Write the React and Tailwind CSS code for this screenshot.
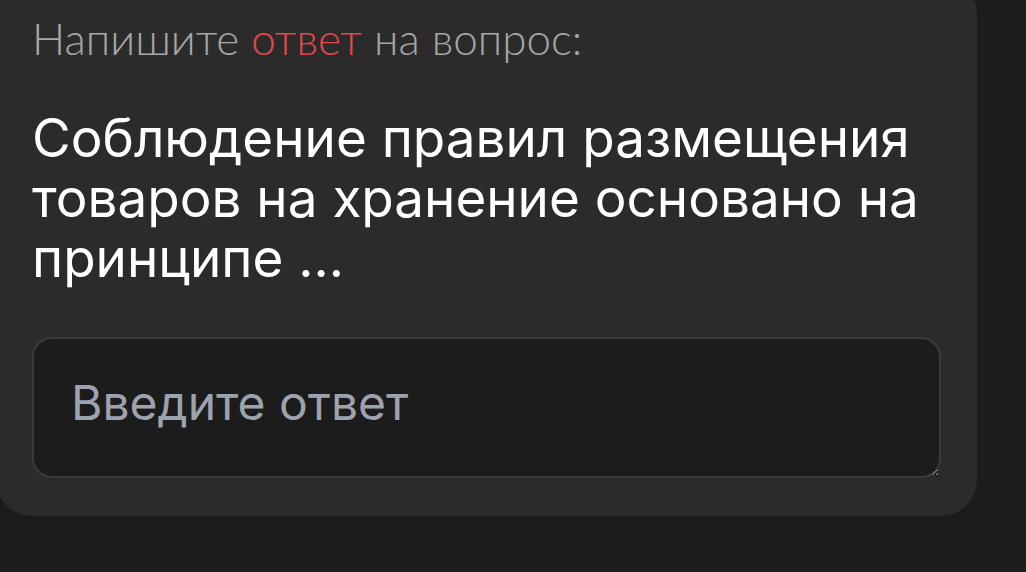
export default function App() {
  return (
    <div className="w-full h-[572px] bg-[#1c1c1c] overflow-hidden">
      <div className="ml-[-4px] mt-[-22px] w-[981px] rounded-[36px] bg-[#2b2b2b] px-[36px] pt-[34px] pb-[38px]">
        <p className="text-[44px] leading-[52px] font-light text-[#a6a6a6] mb-[44px] whitespace-nowrap" style={{ fontFamily: "Lato, sans-serif" }}>
          Напишите <span className="text-[#e5484d]">ответ</span> на вопрос:
        </p>
        <p className="text-[53px] leading-[60px] text-white mb-[49px] whitespace-nowrap" style={{ fontFamily: "Inter, sans-serif" }}>
          Соблюдение правил размещения<br />товаров на хранение основано на<br />принципе ...
        </p>
        <textarea
          className="block w-full h-[141px] box-border rounded-[20px] border-2 border-[#3a3a3a] bg-[#1c1c1c] pl-[37px] pr-[37px] pt-[36px] text-[48px] leading-[56px] text-white placeholder:text-[#9ca3af] outline-none"
          style={{ fontFamily: "Inter, sans-serif" }}
          placeholder="Введите ответ"
        />
      </div>
    </div>
  );
}
